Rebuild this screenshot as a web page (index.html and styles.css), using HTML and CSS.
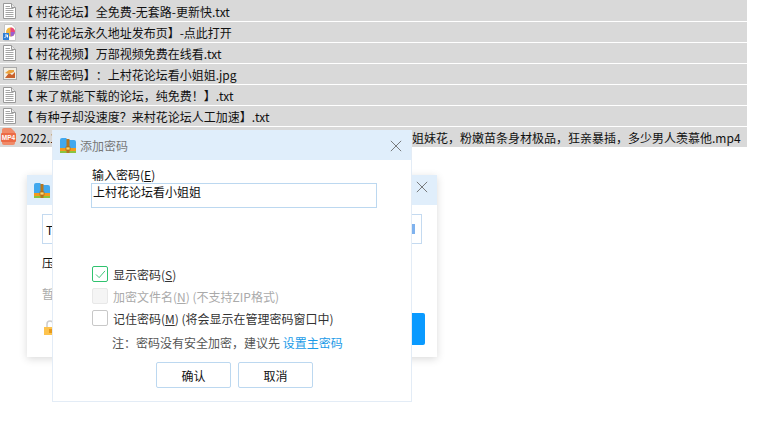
FILE: index.html
```html
<!DOCTYPE html>
<html lang="zh-CN">
<head>
    <meta charset="UTF-8">
    <meta name="viewport" content="width=device-width, initial-scale=1.0">
    <title>添加密码</title>
    <link rel="stylesheet" href="styles.css">
</head>
<body>
    <svg class="defs" width="0" height="0">
        <defs>
            <symbol id="txt" viewBox="0 0 16 18">
                <path d="M2.500 1.500H10.500L14.500 5.500V16.500H2.500Z" fill="#fff" stroke="#999"/>
                <path d="M10.500 1.500V5.500H14.500" fill="#e8e8e8" stroke="#999"/>
                <path d="M4.500 4.500H9M4.500 6.500H12.500M4.500 8.500H12.500M4.500 10.500H12.500M4.500 12.500H12.500M4.500 14.500H12.500" stroke="#a5a5a5"/>
            </symbol>
            <symbol id="zip" viewBox="0 0 16 15">
                <path d="M0 2Q0 0 2 0H6L8 2H14Q16 2 16 4V11H0Z" fill="#41a8ee"/>
                <rect y="10" width="16" height="3" fill="#f39a1e"/>
                <rect y="13" width="16" height="2" fill="#8ac43f"/>
                <rect x="6.500" y="1" width="3" height="14" fill="#b5761f"/>
                <rect x="6" y="9" width="4" height="3" fill="#ffd66b" stroke="#a3661a" stroke-width=".7"/>
            </symbol>
        </defs>
    </svg>

    <ul class="file-list">
        <li class="file-row">
            <svg class="file-icon"><use href="#txt"/></svg>
            <span>【 村花论坛】全免费-无套路-更新快.txt</span>
        </li>
        <li class="file-row">
            <svg class="file-icon" viewBox="0 0 16 18">
                <path d="M3.500 1.500H11L14.500 5V17.500H3.500Z" fill="#fff" stroke="#c4c4c4"/>
                <circle cx="9.500" cy="9" r="4.500" fill="#f4b73f"/>
                <path d="M9.500 4.500A4.500 4.500 0 0 1 14 9H9.500Z" fill="#e8467c"/>
                <path d="M9.500 9H14A4.500 4.500 0 0 1 9.500 13.500Z" fill="#9b5fd0"/>
                <rect x="2" y="10" width="6" height="7" fill="#2f7fd6"/>
                <path d="M3.500 15L6 12.500M4 12H6.500V14.500" stroke="#fff" fill="none"/>
            </svg>
            <span>【 村花论坛永久地址发布页】-点此打开</span>
        </li>
        <li class="file-row">
            <svg class="file-icon"><use href="#txt"/></svg>
            <span>【 村花视频】万部视频免费在线看.txt</span>
        </li>
        <li class="file-row">
            <svg class="file-icon" viewBox="0 0 16 18">
                <rect x="2.500" y="2.500" width="13" height="12" fill="#f2efe6" stroke="#aaa"/>
                <path d="M4 13L8 8L11 10L14 7V13Z" fill="#c9622d"/>
                <path d="M4 8L8 5H13V7L8 9Z" fill="#e9a13c"/>
            </svg>
            <span>【 解压密码】：上村花论坛看小姐姐.jpg</span>
        </li>
        <li class="file-row">
            <svg class="file-icon"><use href="#txt"/></svg>
            <span>【 来了就能下载的论坛，纯免费！】.txt</span>
        </li>
        <li class="file-row">
            <svg class="file-icon"><use href="#txt"/></svg>
            <span>【 有种子却没速度？来村花论坛人工加速】.txt</span>
        </li>
        <li class="file-row file-row-video">
            <svg class="file-icon" viewBox="0 0 16 18">
                <path d="M2 2Q2 0 4 0H11L15 4V15Q15 17 13 17H4Q2 17 2 15Z" fill="#f08a68"/>
                <rect x="1" y="5" width="15" height="9" rx="1" fill="#ec6a45"/>
                <text class="mp4-text" x="8.500" y="12.300" text-anchor="middle">MP4</text>
            </svg>
            <span class="video-start">2022.1</span>
            <span class="video-end">姐妹花，粉嫩苗条身材极品，狂亲暴插，多少男人羡慕他.mp4</span>
        </li>
    </ul>

    <!-- window behind the password dialog -->
    <section class="window window-back">
        <header class="title-bar">
            <svg class="title-icon"><use href="#zip"/></svg>
            <svg class="close-icon" viewBox="0 0 14 14"><path d="M1 1L13 13M13 1L1 13"/></svg>
        </header>
        <div class="back-body">
            <div class="back-input">
                <span>T</span>
                <span class="back-input-icon"></span>
            </div>
            <div class="back-label">压</div>
            <div class="back-hint">暂</div>
            <div class="back-footer">
                <svg class="lock-icon" viewBox="0 0 12 15">
                    <path d="M3 7V4A3 3 0 0 1 9 4V7" fill="none" stroke="#ccc" stroke-width="1.500"/>
                    <rect y="7" width="12" height="8" fill="#fdc34d"/>
                    <rect x="5" y="9" width="4" height="4" fill="#e89b1c"/>
                </svg>
                <div class="back-button"></div>
            </div>
        </div>
    </section>

    <section class="window window-front">
        <header class="title-bar">
            <svg class="title-icon"><use href="#zip"/></svg>
            <span class="title-text">添加密码</span>
            <svg class="close-icon" viewBox="0 0 14 14"><path d="M1 1L13 13M13 1L1 13"/></svg>
        </header>
        <div class="dialog-body">
            <label class="input-label">输入密码(<u>E</u>)</label>
            <div class="password-input">上村花论坛看小姐姐</div>
            <div class="options">
                <div class="option">
                    <span class="check check-on">
                        <svg viewBox="0 0 12 10"><path d="M1 5L4.500 8.500L11 1"/></svg>
                    </span>
                    <span>显示密码(<u>S</u>)</span>
                </div>
                <div class="option option-disabled">
                    <span class="check"></span>
                    <span>加密文件名(<u>N</u>) (不支持ZIP格式)</span>
                </div>
                <div class="option">
                    <span class="check"></span>
                    <span>记住密码(<u>M</u>) (将会显示在管理密码窗口中)</span>
                </div>
            </div>
            <p class="note">注：密码没有安全加密，建议先 <a class="note-link">设置主密码</a></p>
            <div class="buttons">
                <button class="btn">确认</button>
                <button class="btn">取消</button>
            </div>
        </div>
    </section>
</body>
</html>
```

FILE: styles.css
```css
html, body {
    height: 100%;
}

body {
    margin: 0;
    background-color: #fff;
    color: #111;
    font-family: "Noto Sans CJK SC", "Liberation Sans", sans-serif;
    font-size: 12px;
    text-spacing-trim: space-all;
    overflow: hidden;
    position: relative;
}

.defs {
    position: absolute;
}

.file-list {
    list-style: none;
    margin: 0;
    padding: 0;
    width: 747px;
}

.file-row {
    display: flex;
    align-items: center;
    box-sizing: border-box;
    height: 20px;
    padding-top: 2px;
    margin-bottom: 1px;
    background-color: #d9d9d9;
    white-space: nowrap;
    line-height: 18px;
}

.file-row:first-child {
    height: 21px;
}

.file-icon {
    width: 16px;
    height: 18px;
    margin: -2px 4px 0 1px;
    flex: none;
}

.file-row-video .file-icon {
    margin-left: 0;
    margin-right: 4px;
}

.mp4-text {
    fill: #fff;
    font-family: "Liberation Sans", sans-serif;
    font-size: 6.500px;
    font-weight: bold;
}

.video-end {
    position: absolute;
    left: 412px;
}

.window {
    position: absolute;
    background-color: #fff;
    box-sizing: border-box;
}

.window-back {
    left: 27px;
    top: 175px;
    width: 410px;
    height: 182px;
    box-shadow: 0 2px 8px rgba(0, 0, 0, 0.15);
}

.window-front {
    left: 52px;
    top: 130px;
    width: 360px;
    height: 272px;
    border: 1px solid #e3ecf6;
    border-top: none;
}

.title-bar {
    display: flex;
    align-items: center;
    height: 30px;
    background-color: #e0eefb;
    padding: 0 9px 0 7px;
}

.title-icon {
    width: 16px;
    height: 15px;
    flex: none;
}

.title-text {
    margin-left: 4px;
    color: #777;
}

.close-icon {
    width: 12px;
    height: 12px;
    margin: 2px 0 0 auto;
    fill: none;
    stroke: #666;
}

.window-back .close-icon {
    margin-top: -6px;
}

.back-body {
    padding: 9px 15px 0 15px;
}

.back-input {
    display: flex;
    justify-content: space-between;
    align-items: center;
    box-sizing: border-box;
    height: 30px;
    border: 1px solid #c4daf0;
    padding: 0 6px 0 3px;
}

.back-input-icon {
    width: 3px;
    height: 10px;
    background-color: #7fb2ee;
}

.back-label {
    margin-top: 10px;
    line-height: 17px;
}

.back-hint {
    margin-top: 14px;
    line-height: 17px;
    color: #aaa;
}

.back-footer {
    display: flex;
    justify-content: space-between;
    margin: 11px -3px 0 2px;
}

.lock-icon {
    width: 12px;
    height: 15px;
    margin-top: 7px;
}

.back-button {
    width: 80px;
    height: 32px;
    background-color: #0a9aff;
    border-radius: 2px;
}

.dialog-body {
    padding: 6px 34px 0 38px;
}

.input-label {
    display: block;
    line-height: 17px;
    padding-left: 1px;
}

.password-input {
    width: 286px;
    height: 25px;
    box-sizing: border-box;
    border: 1px solid #bcd8f0;
    padding-left: 1px;
    line-height: 16px;
}

.options {
    margin-top: 58px;
    padding-left: 1px;
    display: flex;
    flex-direction: column;
    gap: 6px;
}

.option {
    display: flex;
    align-items: center;
    gap: 5px;
    height: 16px;
    color: #333;
    white-space: nowrap;
}

.option-disabled {
    color: #aaa;
}

.check {
    width: 14px;
    height: 14px;
    border: 1px solid #c8c8c8;
    border-radius: 2px;
    display: flex;
    align-items: center;
    justify-content: center;
    flex: none;
}

.option-disabled .check {
    background-color: #f5f5f5;
    border-color: #e8e8e8;
}

.check-on {
    border-color: #2fc26e;
}

.check-on svg {
    width: 11px;
    height: 9px;
    fill: none;
    stroke: #2fc26e;
}

.note {
    margin: 8px 0 0 21px;
    line-height: 17px;
    color: #555;
    white-space: nowrap;
}

.note-link {
    color: #1a9be8;
}

.buttons {
    display: flex;
    gap: 7px;
    margin: 11px 0 0 65px;
}

.btn {
    width: 75px;
    height: 26px;
    background-color: #fff;
    border: 1px solid #bcd8f0;
    border-radius: 2px;
    color: #111;
    font: inherit;
}
```
